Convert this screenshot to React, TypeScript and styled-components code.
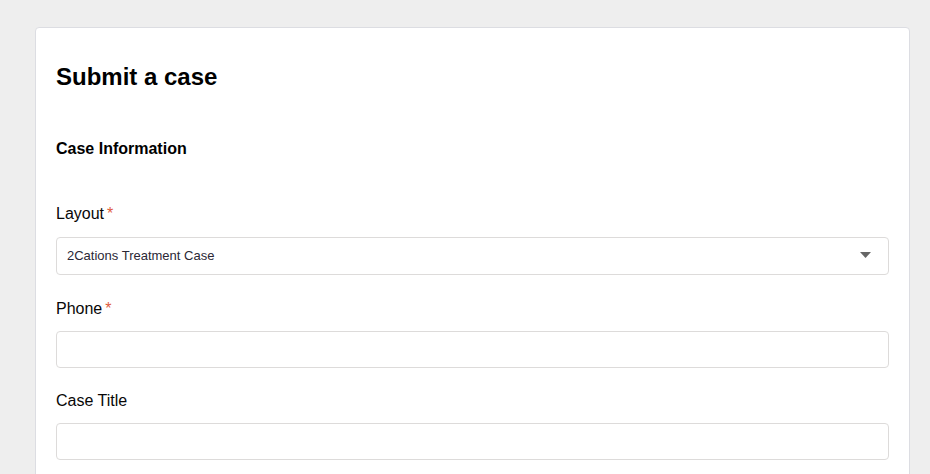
import styled, { createGlobalStyle } from "styled-components";

const GlobalStyle = createGlobalStyle`
  html, body {
    margin: 0;
    padding: 0;
    background: #eeeeee;
    font-family: "Liberation Sans", Arial, sans-serif;
  }
`;

const fields = [
  { label: "Layout", required: true, kind: "select", value: "2Cations Treatment Case" },
  { label: "Phone", required: true, kind: "input", value: "" },
  { label: "Case Title", required: false, kind: "input", value: "" },
];

export default function App() {
  return (
    <>
      <GlobalStyle />
      <StyledPage>
        <StyledCard>
          <StyledTitle>Submit a case</StyledTitle>
          <StyledSection>Case Information</StyledSection>
          {fields.map(({ label, required, kind, value }) => (
            <StyledField key={label}>
              <StyledLabel>
                {label}
                {required && <StyledRequired>*</StyledRequired>}
              </StyledLabel>
              {kind === "select" ? (
                <StyledSelect>
                  <span>{value}</span>
                  <svg width="11" height="6" viewBox="0 0 11 6">
                    <path d="M0 0 H11 L5.5 6 Z" fill="#666" />
                  </svg>
                </StyledSelect>
              ) : (
                <StyledInput type="text" defaultValue={value} />
              )}
            </StyledField>
          ))}
        </StyledCard>
      </StyledPage>
    </>
  );
}

const StyledPage = styled.div`
  padding: 27px 20px 0 35px;
  height: 474px;
  box-sizing: border-box;
  overflow: hidden;
`;

const StyledCard = styled.div`
  background: #ffffff;
  border: 1px solid #dcdde2;
  border-radius: 4px;
  padding: 34px 20px 40px;
  min-height: 600px;
`;

const StyledTitle = styled.h1`
  margin: 0;
  font-size: 24px;
  line-height: 30px;
  font-weight: 700;
  color: #000;
`;

const StyledSection = styled.h2`
  margin: 47px 0 45px;
  font-size: 16px;
  line-height: 20px;
  font-weight: 700;
  color: #000;
`;

const StyledField = styled.div`
  display: flex;
  flex-direction: column;
  gap: 12px;
  margin-bottom: 23px;
`;

const StyledLabel = styled.label`
  font-size: 16px;
  line-height: 20px;
  color: #080707;
`;

const StyledRequired = styled.span`
  color: #e05b3c;
  margin-left: 3px;
`;

const StyledSelect = styled.div`
  margin: 1px 0;
  height: 38px;
  box-sizing: border-box;
  border: 1px solid #dddbda;
  border-radius: 4px;
  display: flex;
  align-items: center;
  justify-content: space-between;
  padding: 0 17px 2px 10px;
  font-size: 13px;
  color: #2b2836;
`;

const StyledInput = styled.input`
  height: 37px;
  box-sizing: border-box;
  border: 1px solid #dddbda;
  border-radius: 4px;
  font-family: inherit;
  font-size: 13px;
  padding: 0 10px;
  outline: none;
`;
